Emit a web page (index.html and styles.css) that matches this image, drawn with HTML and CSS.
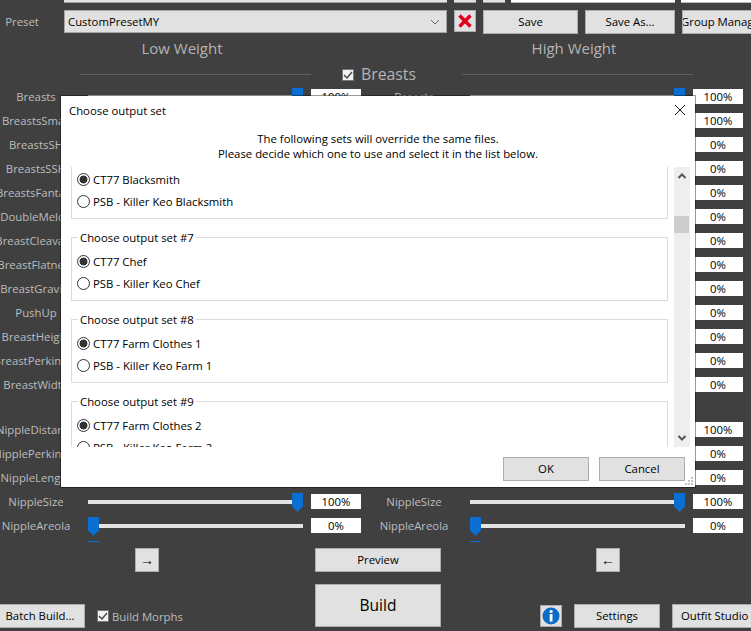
FILE: index.html
```html
<!DOCTYPE html>
<html lang="en">
<head>
<meta charset="utf-8">
<title>BodySlide</title>
<link rel="stylesheet" href="styles.css">
</head>
<body>
<main class="app">
  <div class="top-strip">
    <div class="strip strip-combo"></div>
    <div class="strip strip-btn"></div>
    <div class="strip strip-btn strip-btn2"></div>
    <div class="strip strip-white strip-w1"></div>
    <div class="strip strip-white strip-w2"></div>
  </div>

  <div class="preset-row">
    <span class="preset-label">Preset</span>
    <div class="combo"><span>CustomPresetMY</span>
      <svg class="chev" width="10" height="6" viewBox="0 0 10 6"><path d="M1 1l4 4 4-4" fill="none" stroke="#666" stroke-width="1"/></svg>
    </div>
    <button class="btn btn-del"><svg width="14" height="14" viewBox="0 0 14 14"><path d="M1.5 1.5l11 11M12.5 1.5l-11 11" fill="none" stroke="#e2001a" stroke-width="3.4"/></svg></button>
    <button class="btn btn-save">Save</button>
    <button class="btn btn-saveas">Save As...</button>
    <button class="btn btn-group"><span>Group Manager</span></button>
  </div>

  <div class="weights">
    <h2 class="weight">Low Weight</h2>
    <h2 class="weight">High Weight</h2>
  </div>

  <div class="category">
    <hr class="cat-line">
    <label class="cat-name"><input type="checkbox" class="check" checked>Breasts</label>
    <hr class="cat-line">
  </div>

  <section class="rows rows-first">
    <div class="row"><span class="lab">Breasts</span><div class="slider end"><i></i></div><span class="val">100%</span><span class="lab lab-r">Breasts</span><div class="slider end"><i></i></div><span class="val">100%</span></div>
    <div class="row"><span class="lab">BreastsSmall</span><div class="slider"><i></i></div><span class="val">100%</span><span class="lab lab-r">BreastsSmall</span><div class="slider"><i></i></div><span class="val">100%</span></div>
    <div class="row"><span class="lab">BreastsSH</span><div class="slider"><i></i></div><span class="val">0%</span><span class="lab lab-r">BreastsSH</span><div class="slider"><i></i></div><span class="val">0%</span></div>
    <div class="row"><span class="lab">BreastsSSH</span><div class="slider"><i></i></div><span class="val">0%</span><span class="lab lab-r">BreastsSSH</span><div class="slider"><i></i></div><span class="val">0%</span></div>
    <div class="row"><span class="lab">BreastsFantasy</span><div class="slider"><i></i></div><span class="val">0%</span><span class="lab lab-r">BreastsFantasy</span><div class="slider"><i></i></div><span class="val">0%</span></div>
    <div class="row"><span class="lab">DoubleMelon</span><div class="slider"><i></i></div><span class="val">0%</span><span class="lab lab-r">DoubleMelon</span><div class="slider"><i></i></div><span class="val">0%</span></div>
    <div class="row"><span class="lab">BreastCleavage</span><div class="slider"><i></i></div><span class="val">0%</span><span class="lab lab-r">BreastCleavage</span><div class="slider"><i></i></div><span class="val">0%</span></div>
    <div class="row"><span class="lab">BreastFlatness</span><div class="slider"><i></i></div><span class="val">0%</span><span class="lab lab-r">BreastFlatness</span><div class="slider"><i></i></div><span class="val">0%</span></div>
    <div class="row"><span class="lab">BreastGravity</span><div class="slider"><i></i></div><span class="val">0%</span><span class="lab lab-r">BreastGravity</span><div class="slider"><i></i></div><span class="val">0%</span></div>
    <div class="row"><span class="lab">PushUp</span><div class="slider"><i></i></div><span class="val">0%</span><span class="lab lab-r">PushUp</span><div class="slider"><i></i></div><span class="val">0%</span></div>
    <div class="row"><span class="lab">BreastHeight</span><div class="slider"><i></i></div><span class="val">0%</span><span class="lab lab-r">BreastHeight</span><div class="slider"><i></i></div><span class="val">0%</span></div>
    <div class="row"><span class="lab">BreastPerkiness</span><div class="slider"><i></i></div><span class="val">0%</span><span class="lab lab-r">BreastPerkiness</span><div class="slider"><i></i></div><span class="val">0%</span></div>
    <div class="row"><span class="lab">BreastWidth</span><div class="slider"><i></i></div><span class="val">0%</span><span class="lab lab-r">BreastWidth</span><div class="slider"><i></i></div><span class="val">0%</span></div>
  </section>

  <section class="rows rows-second">
    <div class="row"><span class="lab">NippleDistance</span><div class="slider"><i></i></div><span class="val">100%</span><span class="lab lab-r">NippleDistance</span><div class="slider"><i></i></div><span class="val">100%</span></div>
    <div class="row"><span class="lab">NipplePerkiness</span><div class="slider"><i></i></div><span class="val">0%</span><span class="lab lab-r">NipplePerkiness</span><div class="slider"><i></i></div><span class="val">0%</span></div>
    <div class="row"><span class="lab">NippleLength</span><div class="slider"><i></i></div><span class="val">0%</span><span class="lab lab-r">NippleLength</span><div class="slider"><i></i></div><span class="val">0%</span></div>
    <div class="row"><span class="lab">NippleSize</span><div class="slider end"><i></i></div><span class="val">100%</span><span class="lab lab-r">NippleSize</span><div class="slider end"><i></i></div><span class="val">100%</span></div>
    <div class="row"><span class="lab">NippleAreola</span><div class="slider"><i></i></div><span class="val">0%</span><span class="lab lab-r">NippleAreola</span><div class="slider"><i></i></div><span class="val">0%</span></div>
  </section>

  <div class="ticks"><i></i><i class="tick-r"></i></div>

  <div class="preview-row">
    <button class="btn btn-arrow btn-arrow-l">→</button>
    <button class="btn btn-preview">Preview</button>
    <button class="btn btn-arrow btn-arrow-r">←</button>
  </div>

  <div class="bottom-row">
    <button class="btn btn-batch">Batch Build...</button>
    <label class="morphs"><input type="checkbox" class="check" checked>Build Morphs</label>
    <button class="btn btn-build">Build</button>
    <button class="btn btn-info"><svg width="18" height="18" viewBox="0 0 18 18"><circle cx="9" cy="9" r="8.5" fill="#0a6cc4"/><rect x="7.7" y="3.2" width="2.8" height="2.6" fill="#fff"/><rect x="7.7" y="7" width="2.8" height="7.6" fill="#fff"/></svg></button>
    <button class="btn btn-settings">Settings</button>
    <button class="btn btn-outfit"><span>Outfit Studio</span></button>
  </div>
</main>

<div class="dialog" role="dialog">
  <header class="dlg-title"><span>Choose output set</span>
    <svg width="12" height="12" viewBox="0 0 12 12"><path d="M1 1l10 10M11 1L1 11" fill="none" stroke="#111" stroke-width="1"/></svg>
  </header>
  <p class="dlg-msg">The following sets will override the same files.<br>Please decide which one to use and select it in the list below.</p>
  <div class="dlg-scroll">
    <div class="dlg-list">
      <fieldset class="grp grp-cut">
        <label class="opt"><input type="radio" name="g6" class="radio" checked>CT77 Blacksmith</label>
        <label class="opt"><input type="radio" name="g6" class="radio">PSB - Killer Keo Blacksmith</label>
      </fieldset>
      <fieldset class="grp">
        <legend>Choose output set #7</legend>
        <label class="opt"><input type="radio" name="g7" class="radio" checked>CT77 Chef</label>
        <label class="opt"><input type="radio" name="g7" class="radio">PSB - Killer Keo Chef</label>
      </fieldset>
      <fieldset class="grp">
        <legend>Choose output set #8</legend>
        <label class="opt"><input type="radio" name="g8" class="radio" checked>CT77 Farm Clothes 1</label>
        <label class="opt"><input type="radio" name="g8" class="radio">PSB - Killer Keo Farm 1</label>
      </fieldset>
      <fieldset class="grp">
        <legend>Choose output set #9</legend>
        <label class="opt"><input type="radio" name="g9" class="radio" checked>CT77 Farm Clothes 2</label>
        <label class="opt"><input type="radio" name="g9" class="radio">PSB - Killer Keo Farm 2</label>
      </fieldset>
    </div>
    <div class="scrollbar">
      <svg width="10" height="6" viewBox="0 0 10 6"><path d="M1.5 5L5 1.5 8.5 5" fill="none" stroke="#555" stroke-width="2"/></svg>
      <div class="sb-track"><div class="sb-thumb"></div></div>
      <svg width="10" height="6" viewBox="0 0 10 6"><path d="M1.5 1L5 4.5 8.5 1" fill="none" stroke="#555" stroke-width="2"/></svg>
    </div>
  </div>
  <footer class="dlg-foot">
    <button class="btn dlg-btn">OK</button>
    <button class="btn dlg-btn">Cancel</button>
    <svg class="grip" width="9" height="9" viewBox="0 0 9 9"><path d="M6 0h2v2H6zM3 3h2v2H3zM6 3h2v2H6zM0 6h2v2H0zM3 6h2v2H3zM6 6h2v2H6z" fill="#c4c4c4"/></svg>
  </footer>
</div>
</body>
</html>
```
FILE: styles.css
```css
* { box-sizing: border-box; }
html, body { margin: 0; padding: 0; }
body {
  width: 751px;
  height: 631px;
  overflow: hidden;
  position: relative;
  background: #404040;
  font-family: "Open Sans", "Noto Sans", sans-serif;
  font-size: 11.35px;
  color: #000;
}
.app { width: 751px; height: 631px; overflow: hidden; }

.top-strip { display: flex; height: 3px; overflow: hidden; }
.strip { height: 3px; background: #e1e1e1; border-bottom: 1px solid #a0a0a0; flex: none; }
.strip-combo { width: 383px; margin-left: 64px; }
.strip-btn { width: 22px; margin-left: 7px; }
.strip-btn2 { margin-left: 7px; }
.strip-white { background: #fff; border-bottom-color: #bbb; }
.strip-w1 { width: 164px; margin-left: 6px; }
.strip-w2 { width: 70px; margin-left: 6px; }

.btn {
  display: flex;
  align-items: center;
  justify-content: center;
  flex: none;
  padding: 0 0 1px;
  margin: 0;
  background: #e1e1e1;
  border: 1px solid #adadad;
  border-radius: 0;
  font: inherit;
  color: #000;
  overflow: hidden;
  white-space: nowrap;
}

.preset-row { display: flex; height: 24px; margin-top: 7px; }
.preset-label {
  width: 44px;
  margin-right: 20px;
  flex: none;
  line-height: 23px;
  text-align: center;
  color: #bdbdbd;
}
.combo {
  width: 383px;
  height: 23px;
  flex: none;
  display: flex;
  align-items: center;
  justify-content: space-between;
  padding: 0 6px 0 3px;
  background: #e1e1e1;
  border: 1px solid #a6a6a6;
}
.btn-del { width: 22px; height: 22px; margin-left: 7px; padding: 0; }
.btn-save { width: 95px; height: 24px; margin-left: 7px; }
.btn-saveas { width: 90px; height: 24px; margin-left: 7px; }
.btn-group { width: 86px; height: 24px; margin-left: 7px; justify-content: flex-start; }
.btn-group span { margin-left: -2px; }

.weights { display: flex; gap: 28px; height: 30px; }
.weight {
  margin: 0;
  width: 364px;
  font-size: 15px;
  font-weight: 400;
  line-height: 28px;
  text-align: center;
  color: #b4b4b4;
  flex: none;
}

.category { display: flex; align-items: center; height: 21px; padding-left: 80px; margin-bottom: 1px; }
.cat-line { width: 231px; height: 1px; margin: 0; border: 0; background: #606060; flex: none; }
.cat-name {
  width: 151px;
  flex: none;
  display: flex;
  align-items: center;
  padding-left: 31px;
  padding-bottom: 2px;
  font-size: 15.8px;
  color: #b4b4b4;
  gap: 7px;
}
.cat-name .check { margin-top: 2px; }

.check {
  appearance: none;
  -webkit-appearance: none;
  margin: 0;
  width: 12px;
  height: 12px;
  flex: none;
  background-color: #f2f2f2;
  border: 1px solid #777;
  background-image: url("data:image/svg+xml,%3Csvg xmlns='http://www.w3.org/2000/svg' width='10' height='10'%3E%3Cpath d='M1 5l3 3 5-6' fill='none' stroke='%23444' stroke-width='1.4'/%3E%3C/svg%3E");
  background-position: center;
  background-repeat: no-repeat;
}

.rows { display: flex; flex-direction: column; }
.rows-second { margin-top: 21px; }
.row { display: flex; height: 24px; flex: none; }
.lab {
  width: 72px;
  flex: none;
  margin-right: 16px;
  display: flex;
  justify-content: center;
  white-space: nowrap;
  line-height: 21px;
  color: #bdbdbd;
}
.lab-r { width: 78px; margin-left: 14px; margin-right: 17px; }
.slider {
  width: 215px;
  height: 19px;
  margin-top: 2px;
  flex: none;
  display: flex;
  background: linear-gradient(#e3e3e3, #e3e3e3) 0 7px / 100% 4px no-repeat;
}
.slider.end { justify-content: flex-end; }
.slider i,
.ticks i {
  display: block;
  width: 11px;
  background: #0a6fd1;
}
.slider i {
  height: 19px;
  clip-path: polygon(0 0, 100% 0, 100% 70%, 50% 100%, 0 70%);
}
.val {
  width: 50px;
  height: 15px;
  margin: 3px 0 0 8px;
  flex: none;
  background: #fff;
  text-align: center;
  line-height: 15px;
  color: #000;
}

.ticks { display: flex; height: 9px; padding: 2px 0 0 88px; }
.ticks i { height: 1px; flex: none; background: #0a6fd1; }
.ticks .tick-r { margin-left: 371px; }

.preview-row { display: flex; height: 24px; }
.btn-arrow { width: 24px; height: 24px; font-family: "Liberation Sans", sans-serif; font-size: 14px; }
.btn-arrow-l { margin-left: 135px; }
.btn-preview { width: 126px; height: 24px; margin-left: 156px; }
.btn-arrow-r { margin-left: 155px; }

.bottom-row { display: flex; align-items: flex-end; height: 59px; padding-bottom: 3px; }
.btn-batch { width: 86px; height: 24px; margin-left: -1px; padding-right: 4px; }
.morphs {
  width: 218px;
  margin-left: 12px;
  height: 24px;
  flex: none;
  display: flex;
  align-items: center;
  gap: 3px;
  color: #bdbdbd;
}
.btn-build { width: 126px; height: 43px; font-size: 15.5px; margin-bottom: 1px; }
.btn-info { width: 22px; height: 22px; margin-left: 99px; margin-bottom: 1px; padding: 0; }
.btn-settings { width: 86px; height: 24px; margin-left: 12px; }
.btn-outfit { width: 86px; height: 24px; margin-left: 12px; justify-content: flex-start; padding-left: 8px; }

.dialog {
  position: absolute;
  left: 61px;
  top: 96px;
  width: 634px;
  height: 391px;
  background: #fff;
  box-shadow: 0 0 0 1px rgba(0, 0, 0, 0.4);
  display: flex;
  flex-direction: column;
}
.dlg-title {
  display: flex;
  align-items: center;
  justify-content: space-between;
  height: 28px;
  padding: 0 9px 0 8px;
  flex: none;
}
.dlg-msg {
  margin: 7px 0 1px;
  height: 35px;
  flex: none;
  line-height: 15px;
  text-align: center;
  color: #000;
}
.dlg-scroll {
  height: 280px;
  flex: none;
  display: flex;
  overflow: hidden;
  padding-left: 10px;
}
.dlg-list { width: 597px; flex: none; }
.grp {
  margin: 0 0 12px;
  padding: 6px 0 0 5px;
  width: 597px;
  height: 70px;
  border: 1px solid #dcdcdc;
  min-inline-size: 0;
}
.grp legend { padding: 0 2px; margin-left: 1px; line-height: 13px; height: 13px; }
.grp-cut { height: 52px; border-top: 0; padding-top: 1px; }
.opt { display: flex; align-items: center; height: 22px; gap: 3px; }
.radio {
  appearance: none;
  -webkit-appearance: none;
  margin: 0;
  width: 13px;
  height: 13px;
  flex: none;
  border: 1px solid #333;
  border-radius: 50%;
  background: #fff;
}
.radio:checked { background: radial-gradient(circle, #333 0, #333 3.6px, #fff 4.3px); }
.scrollbar {
  width: 16px;
  margin-left: 6px;
  flex: none;
  background: #eee;
  display: flex;
  flex-direction: column;
  align-items: center;
  padding: 6px 0;
}
.sb-track { flex: 1; width: 100%; padding-top: 37px; }
.sb-thumb { width: 15px; height: 17px; background: #cdcdcd; }
.dlg-foot {
  flex: 1;
  display: flex;
  justify-content: flex-end;
  gap: 10px;
  padding: 10px 10px 0 0;
  position: relative;
}
.dlg-btn { width: 86px; height: 24px; }
.grip { position: absolute; right: 1px; bottom: 1px; }
```
